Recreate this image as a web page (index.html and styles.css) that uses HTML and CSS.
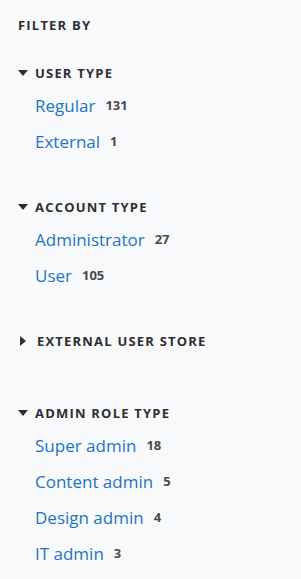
FILE: index.html
```html
<!DOCTYPE html>
<html lang="en">
<head>
    <meta charset="UTF-8">
    <meta name="viewport" content="width=device-width, initial-scale=1.0">
    <title>Filter</title>
    <link rel="stylesheet" href="styles.css">
</head>
<body>
<div class="sidebar">
    <h2 class="filter-title">FILTER BY</h2>

    <div class="filter-group">
        <div class="group-header">
            <span class="caret caret-down"></span>
            <span>USER TYPE</span>
        </div>
        <ul class="filter-list">
            <li><a href="#">Regular</a><span class="count">131</span></li>
            <li><a href="#">External</a><span class="count">1</span></li>
        </ul>
    </div>

    <div class="filter-group">
        <div class="group-header">
            <span class="caret caret-down"></span>
            <span>ACCOUNT TYPE</span>
        </div>
        <ul class="filter-list">
            <li><a href="#">Administrator</a><span class="count">27</span></li>
            <li><a href="#">User</a><span class="count">105</span></li>
        </ul>
    </div>

    <div class="filter-group collapsed">
        <div class="group-header">
            <span class="caret caret-right"></span>
            <span>EXTERNAL USER STORE</span>
        </div>
    </div>

    <div class="filter-group">
        <div class="group-header">
            <span class="caret caret-down"></span>
            <span>ADMIN ROLE TYPE</span>
        </div>
        <ul class="filter-list">
            <li><a href="#">Super admin</a><span class="count">18</span></li>
            <li><a href="#">Content admin</a><span class="count">5</span></li>
            <li><a href="#">Design admin</a><span class="count">4</span></li>
            <li><a href="#">IT admin</a><span class="count">3</span></li>
        </ul>
    </div>
</div>
</body>
</html>
```

FILE: styles.css
```css
body {
    font-family: "Open Sans", "Noto Sans", sans-serif;
    background-color: #f8f9fb;
    margin: 0;
    padding: 0;
    color: #333;
}
.sidebar {
    padding: 17px 18px 0 18px;
}
.filter-title {
    margin: 0 0 32px 0;
    font-size: 13px;
    font-weight: 700;
    letter-spacing: 1.2px;
    line-height: 16px;
    color: #2e2e34;
}
.filter-group {
    margin-bottom: 40px;
}
.filter-group.collapsed {
    margin-bottom: 56px;
}
.filter-group:last-child {
    margin-bottom: 0;
}
.group-header {
    display: flex;
    align-items: center;
    gap: 7px;
    font-size: 13px;
    font-weight: 700;
    letter-spacing: 1.2px;
    line-height: 16px;
    color: #2e2e34;
}
.caret {
    display: inline-block;
    width: 0;
    height: 0;
}
.caret-down {
    border-left: 5px solid transparent;
    border-right: 5px solid transparent;
    border-top: 6px solid #2e2e34;
}
.caret-right {
    border-top: 5px solid transparent;
    border-bottom: 5px solid transparent;
    border-left: 6px solid #2e2e34;
    margin: 0 4px 0 2px;
}
.filter-list {
    list-style: none;
    margin: 0;
    padding: 0 0 0 17px;
}
.filter-list li {
    display: flex;
    align-items: center;
    height: 36px;
}
.filter-list li:first-child {
    margin-top: 6px;
}
.filter-list a {
    color: #1f74c1;
    text-decoration: none;
    font-size: 17px;
}
.count {
    margin-left: 10px;
    font-size: 13px;
    font-weight: 700;
    color: #4a4a50;
}
```
